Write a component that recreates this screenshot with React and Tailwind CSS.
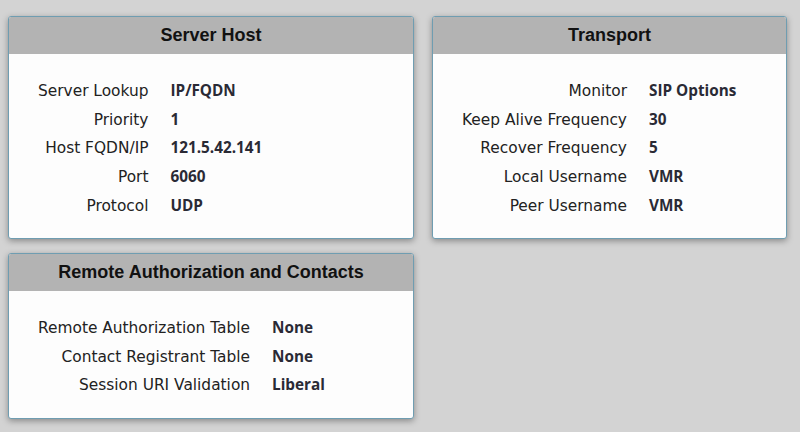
import React from "react";

const cards = {
  server: {
    title: "Server Host",
    rows: [
      ["Server Lookup", "IP/FQDN"],
      ["Priority", "1"],
      ["Host FQDN/IP", "121.5.42.141"],
      ["Port", "6060"],
      ["Protocol", "UDP"],
    ],
  },
  transport: {
    title: "Transport",
    rows: [
      ["Monitor", "SIP Options"],
      ["Keep Alive Frequency", "30"],
      ["Recover Frequency", "5"],
      ["Local Username", "VMR"],
      ["Peer Username", "VMR"],
    ],
  },
  remote: {
    title: "Remote Authorization and Contacts",
    rows: [
      ["Remote Authorization Table", "None"],
      ["Contact Registrant Table", "None"],
      ["Session URI Validation", "Liberal"],
    ],
  },
};

function Card({ data, className = "" }) {
  return (
    <div
      className={`bg-[#fdfdfd] border border-[#6f9db1] rounded-[3px] shadow-[0_2px_6px_rgba(0,0,0,0.35)] overflow-hidden ${className}`}
    >
      <div className="h-[37px] bg-[#b3b3b3] flex items-center justify-center text-[18px] font-bold text-[#111] font-['Liberation_Sans',Arial,sans-serif]">
        {data.title}
      </div>
      <div className="pl-[29px] pt-[29px] pb-[20px]">
        <table>
          <tbody>
            {data.rows.map(([label, value]) => (
              <tr key={label} className="h-[28.7px]">
                <td className="align-baseline text-right text-[#222] pr-[22px] whitespace-nowrap font-['DejaVu_Sans',Verdana,sans-serif] text-[15.4px] leading-none">
                  {label}
                </td>
                <td className="align-baseline font-bold text-[#2a2a35] whitespace-nowrap font-['Open_Sans',sans-serif] text-[15.3px] leading-none">
                  {value}
                </td>
              </tr>
            ))}
          </tbody>
        </table>
      </div>
    </div>
  );
}

export default function App() {
  return (
    <div className="w-[800px] h-[432px] bg-[#d3d3d3] pt-[16px] pl-[8px] overflow-hidden">
      <div className="flex gap-[18px] items-start">
        <Card data={cards.server} className="w-[406px] h-[223px]" />
        <Card data={cards.transport} className="w-[355px] h-[223px]" />
      </div>
      <div className="mt-[14px]">
        <Card data={cards.remote} className="w-[406px] h-[166px]" />
      </div>
    </div>
  );
}
